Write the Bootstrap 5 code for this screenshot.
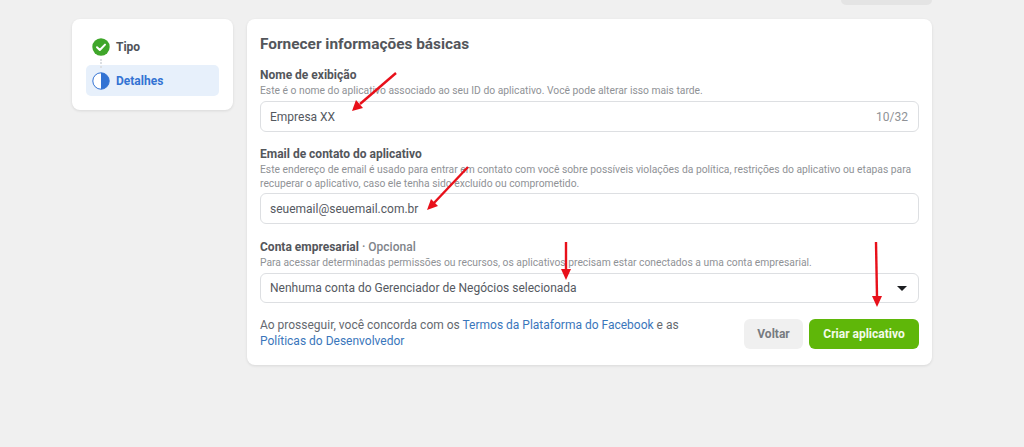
<!DOCTYPE html>
<html lang="pt-BR">
<head>
  <meta charset="UTF-8">
  <title>Criar aplicativo</title>
  <link href="https://cdn.jsdelivr.net/npm/bootstrap@5.3.0/dist/css/bootstrap.min.css" rel="stylesheet">
  <style>
    html, body { height: 447px; overflow: hidden; }
    body {
      background: #f0f0f0;
      font-family: Roboto, "Liberation Sans", sans-serif;
      color: #444950;
      position: relative;
    }
    .top-stub { width: 91px; height: 5px; background: #e4e4e4; border-radius: 0 0 6px 6px; margin-left: 841px; }
    .page-wrap { padding: 14px 92px 0 72px; gap: 14px; }
    .panel { background: #fff; border-radius: 8px; box-shadow: 0 1px 3px rgba(0,0,0,.1); }
    .side-panel { width: 161px; height: 91px; padding: 13px 14px; flex: none; position: relative; }
    .main-panel { width: 685px; height: 346px; padding: 15px 13px 0 13px; flex: none; }
    .step-row { height: 30px; padding-left: 6px; gap: 6px; font-size: 12px; font-weight: 700; border-radius: 5px; color: #4f5359; }
    .step-row svg { flex: none; }
    .step-on { background: #e7f0fb; color: #3373d3; height: 31px; margin-top: 3px; }
    .step-dots { position: absolute; left: 28px; top: 40px; height: 9px; border-left: 2px dotted #dcdfe3; }
    .main-title { font-size: 15.4px; font-weight: 700; line-height: 20px; margin: 0 0 14px; color: #53565b; }
    .fld-label { font-size: 12px; font-weight: 700; line-height: 15px; margin: 0; color: #53565b; display: block; }
    .fld-label span { font-weight: 500; color: #80848a; }
    .fld-help { font-size: 10.3px; line-height: 14px; color: #8f9296; margin: 1px 0 3px; }
    .fld-help-wide { margin-bottom: 2px; }
    .fld-box { height: 31px; border: 1px solid #dddfe2; border-radius: 6px; padding: 0 9px; font-size: 12px; color: #55595f; background: #fff; }
    .fld-select { height: 30px; }
    .fld-gap { margin-bottom: 15px; }
    .fld-gap-wide { margin-bottom: 16px; }
    .fld-count { font-size: 12px; color: #8f9296; padding-right: 1px; }
    .caret-down { width: 0; height: 0; border-left: 5px solid transparent; border-right: 5px solid transparent; border-top: 5px solid #1c1e21; margin-right: 2px; }
    .foot-text { font-size: 12px; line-height: 16px; color: #65696f; margin: 0; width: 430px; }
    .foot-text a { color: #3a76bb; text-decoration: none; }
    .btn-voltar, .btn-criar { height: 30px; font-size: 12px; font-weight: 700; border-radius: 6px; border: 0; padding: 0; }
    .btn-voltar { width: 59px; background: #f0f0f0; color: #777b80; }
    .btn-criar { width: 110px; background: #5fb709; color: #f4fbe9; }
    .foot-row { margin-top: 14px; }
    .foot-btns { gap: 6px; margin-top: 2px; }
    .arrows { position: absolute; left: 0; top: 0; pointer-events: none; }
  </style>
</head>
<body>
  <div class="top-stub"></div>
  <div class="d-flex align-items-start page-wrap">
    <div class="panel side-panel">
      <div class="d-flex align-items-center step-row">
        <svg width="18" height="18" viewBox="0 0 18 18"><circle cx="9" cy="9" r="8.7" fill="#3fa62a"/><path d="M5 9.3l2.8 2.7 5.2-5.4" fill="none" stroke="#fff" stroke-width="2" stroke-linecap="round" stroke-linejoin="round"/></svg>
        <span>Tipo</span>
      </div>
      <div class="d-flex align-items-center step-row step-on">
        <svg width="18" height="18" viewBox="0 0 18 18"><circle cx="9" cy="9" r="8.2" fill="#fff" stroke="#3373d3" stroke-width="1"/><path d="M9 .8a8.2 8.2 0 0 1 0 16.4z" fill="#3373d3"/></svg>
        <span>Detalhes</span>
      </div>
      <div class="step-dots"></div>
    </div>
    <div class="panel main-panel">
      <h1 class="main-title">Fornecer informações básicas</h1>

      <label class="fld-label">Nome de exibição</label>
      <p class="fld-help">Este é o nome do aplicativo associado ao seu ID do aplicativo. Você pode alterar isso mais tarde.</p>
      <div class="d-flex align-items-center justify-content-between fld-box fld-gap">
        <span>Empresa XX</span><span class="fld-count">10/32</span>
      </div>

      <label class="fld-label">Email de contato do aplicativo</label>
      <p class="fld-help fld-help-wide">Este endereço de email é usado para entrar em contato com você sobre possíveis violações da política, restrições do aplicativo ou etapas para recuperar o aplicativo, caso ele tenha sido excluído ou comprometido.</p>
      <div class="d-flex align-items-center fld-box fld-gap-wide">seuemail@seuemail.com.br</div>

      <label class="fld-label">Conta empresarial <span>· Opcional</span></label>
      <p class="fld-help">Para acessar determinadas permissões ou recursos, os aplicativos precisam estar conectados a uma conta empresarial.</p>
      <div class="d-flex align-items-center justify-content-between fld-box fld-select">
        <span>Nenhuma conta do Gerenciador de Negócios selecionada</span><span class="caret-down"></span>
      </div>

      <div class="d-flex align-items-start foot-row">
        <p class="foot-text">Ao prosseguir, você concorda com os <a href="#">Termos da Plataforma do Facebook</a> e as <a href="#">Políticas do Desenvolvedor</a></p>
        <div class="d-flex ms-auto foot-btns">
          <button type="button" class="btn btn-voltar">Voltar</button>
          <button type="button" class="btn btn-criar">Criar aplicativo</button>
        </div>
      </div>
    </div>
  </div>

  <svg class="arrows" width="1024" height="447" viewBox="0 0 1024 447">
    <g stroke="#e8101a" stroke-width="2.4" fill="#e8101a">
      <path d="M396 73L360 104"/><path d="M352 111l4-11 7 8z" stroke="none"/>
      <path d="M468 167L433 204"/><path d="M427 210l4-11 7 7z" stroke="none"/>
      <path d="M566 242L566 270"/><path d="M566 280l-5-11h10z" stroke="none"/>
      <path d="M876 242L877 296"/><path d="M877 307l-5-11h10z" stroke="none"/>
    </g>
  </svg>
</body>
</html>
